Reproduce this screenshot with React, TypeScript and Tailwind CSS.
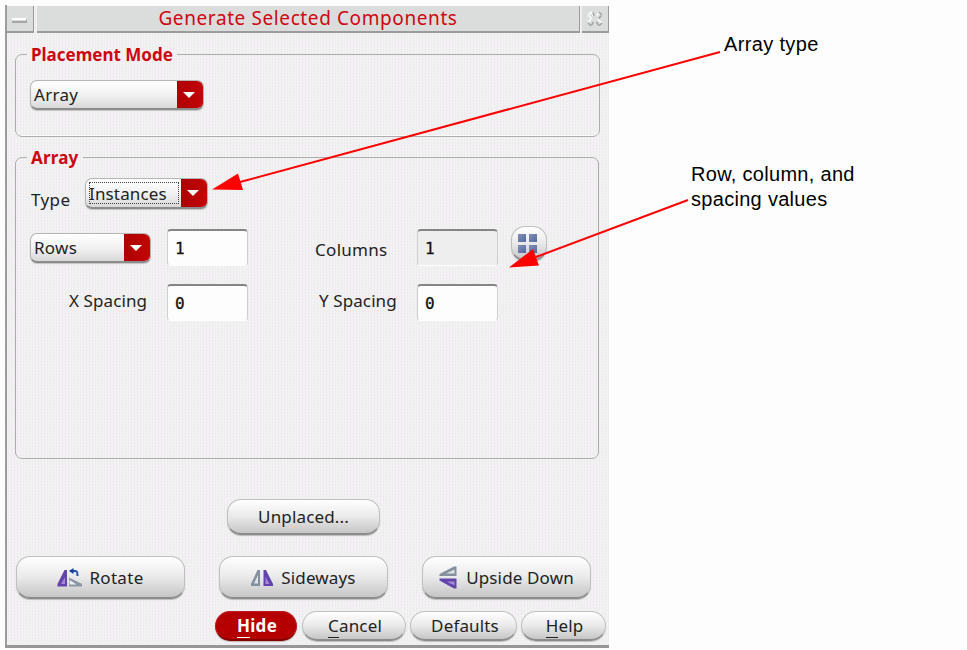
import type { ReactNode } from "react";

function Label({ children, className = "tracking-[0.15px]" }: { children: ReactNode; className?: string }) {
  return <span className={`block shrink-0 whitespace-pre text-[17px] leading-6 text-[#222] ${className}`}>{children}</span>;
}

function Combo({ label, className, focused = false }: { label: string; className: string; focused?: boolean }) {
  return (
    <div
      className={`flex shrink-0 overflow-hidden rounded-[7px] border border-[#b5b5b5] border-b-2 border-b-[#8c8c8c] bg-linear-to-b from-white via-[#f2f2f2] to-[#d9d9d9] shadow-[0_1px_1px_#c4c4c4] ${className}`}
    >
      <div className={`flex flex-1 items-center pt-px ${focused ? "m-[3px] mr-[2px] border border-dotted border-[#444]" : "pl-[3px]"}`}>
        <Label className={focused ? "-ml-px tracking-[0.15px]" : "tracking-[0.3px]"}>{label}</Label>
      </div>
      <div className="flex w-[26px] items-center justify-center bg-linear-to-r from-[#ad0000] to-[#c30505] pr-[3px]">
        <svg width="12" height="6" viewBox="0 0 12 6">
          <path d="M0 0H12L6 6Z" fill="#fff" />
        </svg>
      </div>
    </div>
  );
}

function Field({ value, readOnly = false }: { value: string; readOnly?: boolean }) {
  return (
    <div
      className={`flex h-[37px] w-[81px] shrink-0 items-center rounded-[4px] border border-t-2 border-[#cfcfcf] border-t-[#858585] border-b-white pl-[7px] pt-[2px] font-['DejaVu_Sans_Mono',monospace] text-base text-[#111] [-webkit-text-stroke:0.3px_#111] ${readOnly ? "bg-[#efeeef]" : "bg-[#fdfdfd]"}`}
    >
      {value}
    </div>
  );
}

function Button({ children, className }: { children: ReactNode; className: string }) {
  return (
    <button
      className={`flex shrink-0 items-center justify-center border border-[#c0c0c0] border-b-2 border-b-[#8c8c8c] bg-linear-to-b from-white via-[#eaeaea] to-[#c6c6c6] shadow-[0_1px_1px_#bcbcbc] ${className}`}
    >
      {children}
    </button>
  );
}

function Mnemonic({ text }: { text: string }) {
  return (
    <>
      <span className="inline-block h-[24px] border-b border-current">{text[0]}</span>
      {text.slice(1)}
    </>
  );
}

function RotateIcon() {
  return (
    <svg width="26" height="20" viewBox="0 0 26 20" className="shrink-0">
      <path d="M7.500 2H10V18.500H0.500V16Z" fill="#6242ac" />
      <path d="M8 9V16H4Z" fill="#a48ad4" />
      <path d="M12 9.500L25 16V18.500H12Z" fill="#8b95a3" />
      <path d="M12.500 12V16.500H19.500Z" fill="#eef0f3" />
      <path d="M13 3H18.500Q20.500 3 20.500 8" fill="none" stroke="#2450a5" strokeWidth="2" />
      <path d="M12 3L16.500 0V6Z" fill="#173f9b" />
    </svg>
  );
}

function SidewaysIcon() {
  return (
    <svg width="22" height="18" viewBox="0 0 22 18" className="shrink-0">
      <path d="M6.500 1H9V17H0V15Z" fill="#84909d" />
      <path d="M7 6V14.500H3Z" fill="#dfe4e8" />
      <path d="M12.500 1H15L22 15V17H12.500Z" fill="#6242ac" />
      <path d="M14.500 8V15H18.500Z" fill="#a48ad4" />
    </svg>
  );
}

function UpsideIcon() {
  return (
    <svg width="18" height="23" viewBox="0 0 18 23" className="shrink-0">
      <path d="M15 0.500H17.500V10H0.500V8Z" fill="#84909d" />
      <path d="M15.500 3.500V7.500H7Z" fill="#dce1e6" />
      <path d="M0.500 12.500H17.500V22.500H15L0.500 14.500Z" fill="#6242ac" />
      <path d="M7.500 15.500H15.500V19.500Z" fill="#a28ad0" />
    </svg>
  );
}

function CloseIcon() {
  return (
    <svg width="16" height="16" viewBox="0 0 16 16" fill="none">
      <path d="M1 4L4 1L6 5M1 4L4.500 7.500L1 11M10 5L12 1.500M10.500 8L15 12" stroke="#fafafa" strokeWidth="1.500" />
      <path d="M12 1L15 4L11 8M15 12L12 15L9.500 11M1 12L4 15L6.500 11M6 1.500L7 5" stroke="#a1a4a2" strokeWidth="1.500" strokeDasharray="4 1" />
    </svg>
  );
}

export default function App() {
  return (
    <div className="relative h-[650px] w-[967px] overflow-hidden bg-[#fdfdfd] pl-[5px] pt-[5px] font-['Noto_Sans',sans-serif]">
      <div className="flex h-[643px] w-[604px] flex-col border-b-[3px] border-l-2 border-b-[#969696] border-l-[#9c9c9c] bg-[#eeedee] bg-[repeating-conic-gradient(#eeecee_0_25%,#f5f4f5_0_50%)] bg-size-[3px_3px]">
        <header className="flex h-7 shrink-0 border-t border-[#fafafa]">
          <div className="flex w-[27px] items-center justify-center border-b-2 border-r border-[#9b9b9b] bg-[#dbdddc]">
            <div className="mt-1 h-[5px] w-[15px] border-b-2 border-r border-t-2 border-b-[#a5a5a5] border-r-[#a5a5a5] border-t-white" />
          </div>
          <h1 className="ml-[3px] w-[545px] border-b-2 border-r border-[#9b9b9b] bg-[#dbdddc] text-center text-[19px] leading-[25px] text-[#cd0711]">
            <span className="inline-block whitespace-nowrap tracking-[0.6px]">Generate Selected Components</span>
          </h1>
          <div className="ml-[2px] flex w-[27px] items-center justify-center border-b-2 border-r border-[#9b9b9b] bg-[#dbdddc]">
            <CloseIcon />
          </div>
        </header>

        <fieldset className="ml-2 mt-[9px] h-[95px] w-[585px] shrink-0 rounded-[7px] border border-[#adadad] pl-[14px] shadow-[inset_0_-1px_0_#fafafa]">
          <legend className="-ml-[3px] h-6 px-1 text-[17px] font-bold leading-[26px] text-[#cd0711]">
            <span className="block">Placement Mode</span>
          </legend>
          <Combo label="Array" className="mt-[14px] h-[30px] w-[174px]" />
        </fieldset>

        <fieldset className="ml-2 mt-[8px] h-[314px] w-[584px] shrink-0 rounded-[7px] border border-[#adadad] pl-[14px]">
          <legend className="-ml-[3px] h-6 px-1 text-[17px] font-bold leading-[26px] text-[#cd0711]">
            <span className="block tracking-[0.2px]">Array</span>
          </legend>
          <div className="mt-[9px] flex h-[51px]">
            <Label className="mt-[10px] w-[55px] pl-px tracking-[0.4px]">Type</Label>
            <Combo label="Instances" focused className="h-[31px] w-[123px]" />
          </div>
          <div className="flex h-[55px]">
            <Combo label="Rows" className="mt-1 h-[30px] w-[121px]" />
            <div className="ml-4">
              <Field value="1" />
            </div>
            <Label className="ml-[67px] mt-[9px] w-[102px] tracking-[0.3px]">Columns</Label>
            <Field value="1" readOnly />
            <Button className="-mt-[3px] ml-[13px] h-[35px] w-[36px] rounded-[14px]">
              <span className="mr-[3px] grid grid-cols-2 gap-[3px]">
                <i className="size-2 bg-linear-to-br from-[#8390b4] to-[#5369a2]" />
                <i className="size-2 bg-linear-to-br from-[#8390b4] to-[#5369a2]" />
                <i className="size-2 bg-linear-to-br from-[#8390b4] to-[#5369a2]" />
                <i className="size-2 bg-linear-to-br from-[#8390b4] to-[#5369a2]" />
              </span>
            </Button>
          </div>
          <div className="flex">
            <Label className="ml-[39px] mt-[5px] w-[98px] tracking-[0.1px]">X Spacing</Label>
            <Field value="0" />
            <Label className="ml-[71px] mt-[5px] w-[98px] tracking-[0.1px]">Y Spacing</Label>
            <Field value="0" />
          </div>
        </fieldset>

        <Button className="ml-[220px] mt-10 h-[36px] w-[153px] rounded-[14px]">
          <Label>Unplaced...</Label>
        </Button>
        <div className="ml-[9px] mt-[21px] flex shrink-0 gap-[34px]">
          <Button className="h-[43px] w-[169px] gap-[6px] rounded-[14px] pt-px">
            <RotateIcon />
            <Label className="tracking-[0.3px]">Rotate</Label>
          </Button>
          <Button className="h-[43px] w-[169px] gap-[8px] rounded-[14px] pt-px">
            <SidewaysIcon />
            <Label>Sideways</Label>
          </Button>
          <Button className="h-[43px] w-[169px] gap-[9px] rounded-[14px] pt-px">
            <UpsideIcon />
            <Label>Upside Down</Label>
          </Button>
        </div>
        <div className="ml-[208px] mt-[12px] flex shrink-0">
          <button className="flex h-[30px] w-[82px] items-center justify-center rounded-full border border-[#bd1a1a] border-b-2 border-b-[#860000] bg-[#b50000] pl-[2px] shadow-[0_1px_1px_#bbb]">
            <span className="block whitespace-pre text-[17px] font-bold leading-6 tracking-[0.3px] text-white">
              <Mnemonic text="Hide" />
            </span>
          </button>
          <Button className="ml-[5px] h-[30px] w-[104px] rounded-full pl-[2px]">
            <Label>
              <Mnemonic text="Cancel" />
            </Label>
          </Button>
          <Button className="ml-1 h-[30px] w-[107px] rounded-full pl-[3px]">
            <Label>Defaults</Label>
          </Button>
          <Button className="ml-1 h-[30px] w-[85px] rounded-full pl-[2px]">
            <Label>
              <Mnemonic text="Help" />
            </Label>
          </Button>
        </div>
      </div>

      <svg className="pointer-events-none absolute left-0 top-0" width="967" height="650" viewBox="0 0 967 650">
        <g stroke="#f00" strokeWidth="2" fill="#f00">
          <path d="M720 52L240 182" />
          <path d="M688 200L536 257" />
        </g>
        <path d="M212 189.500L238 173.500L243 190Z" fill="#f00" />
        <path d="M509 267.500L533 249L539 265.500Z" fill="#f00" />
      </svg>
      <p className="absolute left-[724px] top-[32px] whitespace-pre font-['Liberation_Sans',sans-serif] text-[20px] leading-[25px] tracking-[0.35px] text-black">Array type</p>
      <p className="absolute left-[691px] top-[162px] whitespace-pre font-['Liberation_Sans',sans-serif] text-[20px] leading-[25px] tracking-[0.3px] text-black">
        {"Row, column, and\nspacing values"}
      </p>
    </div>
  );
}
